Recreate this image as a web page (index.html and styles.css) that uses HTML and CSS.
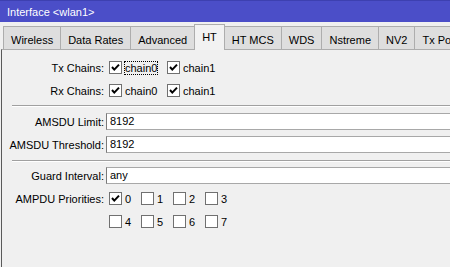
FILE: index.html
```html
<!DOCTYPE html>
<html lang="en">

<head>
    <meta charset="UTF-8">
    <title>Interface &lt;wlan1&gt;</title>
    <link rel="stylesheet" href="styles.css">
</head>

<body>
    <div class="ventana">
        <div class="titulo">Interface &lt;wlan1&gt;</div>

        <div class="pestanas">
            <span class="pestana">Wireless</span>
            <span class="pestana">Data Rates</span>
            <span class="pestana">Advanced</span>
            <span class="pestana activa">HT</span>
            <span class="pestana">HT MCS</span>
            <span class="pestana">WDS</span>
            <span class="pestana">Nstreme</span>
            <span class="pestana">NV2</span>
            <span class="pestana">Tx Power</span>
        </div>

        <div class="panel">
            <div class="fila">
                <span class="etiqueta">Tx Chains:</span>
                <div class="opciones">
                    <span class="opcion ancha"><span class="caja marcada"></span><span class="foco">chain0</span></span>
                    <span class="opcion ancha"><span class="caja marcada"></span>chain1</span>
                </div>
            </div>
            <div class="fila">
                <span class="etiqueta">Rx Chains:</span>
                <div class="opciones">
                    <span class="opcion ancha"><span class="caja marcada"></span>chain0</span>
                    <span class="opcion ancha"><span class="caja marcada"></span>chain1</span>
                </div>
            </div>

            <div class="separador"></div>

            <div class="fila">
                <span class="etiqueta">AMSDU Limit:</span>
                <div class="campo">8192</div>
            </div>
            <div class="fila">
                <span class="etiqueta">AMSDU Threshold:</span>
                <div class="campo">8192</div>
            </div>

            <div class="separador segundo"></div>

            <div class="fila">
                <span class="etiqueta">Guard Interval:</span>
                <div class="campo">any</div>
            </div>
            <div class="fila">
                <span class="etiqueta">AMPDU Priorities:</span>
                <div class="opciones">
                    <span class="opcion"><span class="caja marcada"></span>0</span>
                    <span class="opcion"><span class="caja"></span>1</span>
                    <span class="opcion"><span class="caja"></span>2</span>
                    <span class="opcion"><span class="caja"></span>3</span>
                </div>
            </div>
            <div class="fila">
                <span class="etiqueta"></span>
                <div class="opciones">
                    <span class="opcion"><span class="caja"></span>4</span>
                    <span class="opcion"><span class="caja"></span>5</span>
                    <span class="opcion"><span class="caja"></span>6</span>
                    <span class="opcion"><span class="caja"></span>7</span>
                </div>
            </div>
        </div>
    </div>

    <script>
        // tilde para las cajas marcadas
        const tilde = '<svg width="11" height="11" viewBox="0 0 11 11"><path d="M2 5 L4.3 7.6 L9 2.6" fill="none" stroke="#000" stroke-width="2"/></svg>';
        document.querySelectorAll('.caja.marcada').forEach((caja) => {
            caja.innerHTML = tilde;
        });
    </script>
</body>

</html>
```

FILE: styles.css
```css
body {
    margin: 0;
    background-color: #ffffff;
    font-family: 'Liberation Sans', Arial, sans-serif;
    font-size: 11px;
    color: #000000;
    overflow: hidden;
}

.ventana {
    width: 470px;
    height: 267px;
    background-color: #f0f0f0;
    display: flex;
    flex-direction: column;
}

.titulo {
    height: 22px;
    line-height: 23px;
    padding-left: 7px;
    background-color: #4b4ec8;
    border-top: 1px solid #3d40b0;
    box-sizing: border-box;
    color: #ffffff;
}

.pestanas {
    display: flex;
    align-items: flex-end;
    padding: 2px 0 0 3px;
    height: 27px;
    box-sizing: border-box;
}

.pestana {
    height: 23px;
    box-sizing: border-box;
    padding: 6px 7px 2px;
    line-height: 14px;
    background-color: #dedede;
    border: 1px solid #adadad;
    border-bottom: none;
    margin-right: -1px;
    white-space: nowrap;
}

.pestana.activa {
    position: relative;
    z-index: 1;
    height: 26px;
    padding: 5px 7px 6px;
    margin-bottom: -1px;
    background-color: #f2f2f2;
}

.panel {
    flex: 1;
    margin-left: 1px;
    border-left: 1px solid #5a5a5a;
    border-top: 1px solid #adadad;
    padding-top: 6px;
}

.fila {
    display: flex;
    align-items: center;
    height: 23px;
}

.etiqueta {
    width: 102px;
    text-align: right;
    padding-right: 2px;
    white-space: nowrap;
}

.campo {
    flex: 1;
    height: 17px;
    line-height: 15px;
    padding-left: 3px;
    box-sizing: border-box;
    background-color: #ffffff;
    border: 1px solid #a8a8a8;
    border-left-color: #7a7a7a;
}

.opciones {
    display: flex;
    margin-left: 3px;
}

.opcion {
    display: flex;
    align-items: center;
    width: 32px;
}

.opcion.ancha {
    width: 58px;
}

.caja {
    width: 13px;
    height: 13px;
    box-sizing: border-box;
    margin-right: 3px;
    background-color: #ffffff;
    border: 1px solid #707070;
    display: flex;
    align-items: center;
    justify-content: center;
}

.foco {
    outline: 1px dotted #000000;
    line-height: 12px;
}

.separador {
    margin: 3px 0 3px 10px;
    height: 1px;
    border-top: 1px solid #a0a0a0;
    background-color: #ffffff;
}

.separador.segundo {
    margin: 4px 0 2px 10px;
}
```
